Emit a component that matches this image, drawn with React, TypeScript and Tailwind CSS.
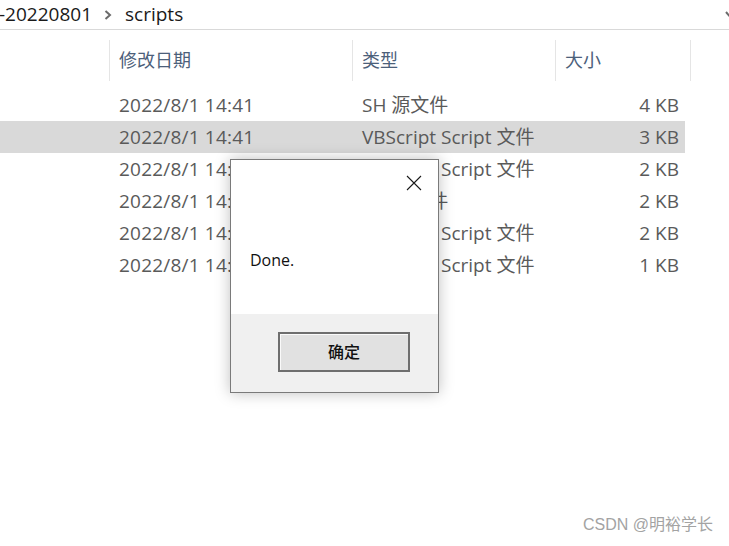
import React from 'react';

const rows = [
  { date: '2022/8/1 14:41', type: 'SH 源文件', size: '4 KB' },
  { date: '2022/8/1 14:41', type: 'VBScript Script 文件', size: '3 KB', selected: true },
  { date: '2022/8/1 14:41', type: 'VBScript Script 文件', size: '2 KB' },
  { date: '2022/8/1 14:41', type: 'SH 源文件', size: '2 KB' },
  { date: '2022/8/1 14:41', type: 'VBScript Script 文件', size: '2 KB' },
  { date: '2022/8/1 14:41', type: 'VBScript Script 文件', size: '1 KB' }
];

const font = "font-['Open_Sans','Noto_Sans_CJK_SC',sans-serif]";

const MessageBox = () => (
  <div className="absolute left-[230px] top-[159px] flex h-[234px] w-[209px] flex-col border border-[#7a7a7a] bg-white shadow-[0_0_14px_rgba(0,0,0,0.25)]">
    <div className="flex h-[154px] flex-col bg-white">
      <div className="flex h-[46px] justify-end pr-[16px] pt-[15px]">
        <svg width="16" height="16" viewBox="0 0 16 16">
          <path d="M1 1 L15 15 M15 1 L1 15" stroke="#1a1a1a" strokeWidth="1.1" />
        </svg>
      </div>
      <div className="pl-[19px] pt-[43px] text-[16px] leading-[22px] text-[#111]">Done.</div>
    </div>
    <div className="flex flex-1 items-start bg-[#f0f0f0] pl-[47px] pt-[18px]">
      <div className="grid h-[40px] w-[132px] place-items-center border-2 border-[#6e6e6e] bg-[#e1e1e1] shadow-[inset_1px_1px_0_#fafafa] text-[16px] font-medium text-[#111]">
        确定
      </div>
    </div>
  </div>
);

export default function App() {
  return (
    <div className={`relative h-[546px] w-[729px] overflow-hidden bg-white ${font}`}>
      <div className="flex h-[30px] items-center border-b border-[#d9d9d9] text-[19px] text-[#1a1a1a]">
        <span className="-ml-[1px]">-20220801</span>
        <svg className="ml-[12px] mr-[13px]" width="8" height="10" viewBox="0 0 8 10">
          <path d="M1.5 1 L6 5 L1.5 9" stroke="#6b6b6b" strokeWidth="2" fill="none" />
        </svg>
        <span>scripts</span>
        <div className="ml-auto mr-[-4px]">
          <svg width="8" height="8" viewBox="0 0 8 8">
            <path d="M1 1 L4 4.5 L7 1" stroke="#6b6b6b" strokeWidth="2" fill="none" />
          </svg>
        </div>
      </div>
      <div className="mt-[10px] flex h-[41px] text-[18px] text-[#4c607a]">
        <div className="w-[109px]" />
        <div className="flex w-[243px] items-center border-l border-[#e5e5e5] pl-[9px]">修改日期</div>
        <div className="flex w-[203px] items-center border-l border-[#e5e5e5] pl-[9px]">类型</div>
        <div className="flex w-[135px] items-center border-l border-[#e5e5e5] pl-[9px]">大小</div>
        <div className="border-l border-[#e5e5e5]" />
      </div>
      <div className="mt-[8px] flex flex-col text-[19px] text-[#5a5a5a]">
        {rows.map((r, i) => (
          <div key={i} className={`flex h-[32px] w-[685px] items-center ${r.selected ? 'bg-[#d9d9d9]' : ''}`}>
            <div className="w-[119px]" />
            <div className="w-[243px] tracking-[0.2px]">{r.date}</div>
            <div className="w-[203px]">{r.type}</div>
            <div className="w-[114px] text-right">{r.size}</div>
          </div>
        ))}
      </div>
      <MessageBox />
      <div className="absolute bottom-[9px] right-[16px] font-['Liberation_Sans','Noto_Sans_CJK_SC',sans-serif] text-[16px] text-[#a3a3a3]">
        CSDN @明裕学长
      </div>
    </div>
  );
}
